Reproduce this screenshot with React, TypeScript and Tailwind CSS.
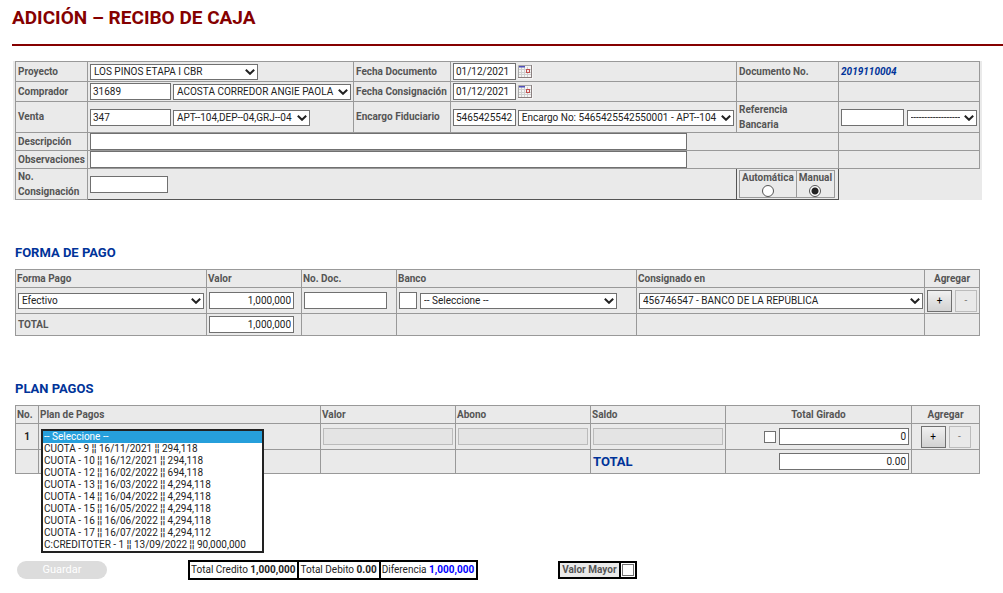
import { useState } from "react";
import type { InputHTMLAttributes, ReactNode, SelectHTMLAttributes } from "react";
import clsx from "clsx";

const CUOTAS = [
  "-- Seleccione --",
  "CUOTA - 9 ¦¦ 16/11/2021 ¦¦ 294,118",
  "CUOTA - 10 ¦¦ 16/12/2021 ¦¦ 294,118",
  "CUOTA - 12 ¦¦ 16/02/2022 ¦¦ 694,118",
  "CUOTA - 13 ¦¦ 16/03/2022 ¦¦ 4,294,118",
  "CUOTA - 14 ¦¦ 16/04/2022 ¦¦ 4,294,118",
  "CUOTA - 15 ¦¦ 16/05/2022 ¦¦ 4,294,118",
  "CUOTA - 16 ¦¦ 16/06/2022 ¦¦ 4,294,118",
  "CUOTA - 17 ¦¦ 16/07/2022 ¦¦ 4,294,112",
  "C:CREDITOTER - 1 ¦¦ 13/09/2022 ¦¦ 90,000,000",
];

const cell = "border border-[#999] p-0 px-[2px]";
const head = "border border-[#999] p-0 px-px font-bold";
const tableBase = "w-full table-fixed border-collapse bg-[#eaeaea]";

function TextBox({
  className,
  ...props
}: InputHTMLAttributes<HTMLInputElement>) {
  return (
    <input
      type="text"
      className={clsx(
        "h-[17px] min-w-0 border border-[#707070] bg-white px-[2px] text-[10px] leading-3 font-normal text-[#222] disabled:border-[#bbb] disabled:bg-[#e4e4e4]",
        className
      )}
      {...props}
    />
  );
}

interface SelectProps extends SelectHTMLAttributes<HTMLSelectElement> {
  options: string[];
}

function Select({ options, className, ...props }: SelectProps) {
  return (
    <span className={clsx("relative block h-4 min-w-0", className)}>
      <select
        className="block h-full w-full appearance-none border border-[#707070] bg-white pr-4 pl-[3px] text-[10px] leading-3 font-normal text-[#222]"
        {...props}
      >
        {options.map((option) => (
          <option key={option}>{option}</option>
        ))}
      </select>
      <svg
        viewBox="0 0 10 6"
        className="pointer-events-none absolute top-[5px] right-[3px] h-[6px] w-[10px]"
        fill="none"
        stroke="#222"
        strokeWidth="2"
      >
        <path d="M0.8 0.8 L5 4.8 L9.2 0.8" />
      </svg>
    </span>
  );
}

function CalendarButton({ label }: { label: string }) {
  return (
    <button type="button" aria-label={label} className="block">
      <svg viewBox="0 0 15 14" className="h-[14px] w-[15px]">
        <rect width="15" height="14" fill="#f5f5f5" />
        <path
          d="M3.5 2V12M6.5 2V12M9.5 2V12M0 4.5H13M0 7.5H13M0 9.5H13"
          stroke="#d0d0d0"
          strokeWidth="1"
        />
        <path d="M0.5 13V0.5H14" fill="none" stroke="#a8a8a8" />
        <path d="M13.5 0V13M0 12.5H14" stroke="#8a8080" strokeWidth="1" />
        <rect x="1" y="1" width="6" height="1.5" fill="#5050b8" />
        <rect x="8.5" y="4.5" width="3" height="3" fill="#f4eaea" stroke="#c25050" />
      </svg>
    </button>
  );
}

function RowButtons({ what }: { what: string }) {
  return (
    <div className="flex justify-center gap-[3px]">
      <button
        type="button"
        aria-label={`Agregar ${what}`}
        className="h-[22px] w-[25px] border border-[#707070] bg-linear-to-b from-[#f0f0f0] to-[#d2d2d2] text-[10px] leading-4 text-black"
      >
        +
      </button>
      <button
        type="button"
        disabled
        aria-label={`Quitar ${what}`}
        className="h-[22px] w-[22px] border border-[#bcbcbc] bg-[#e9e9e9] text-[10px] leading-4 text-[#777]"
      >
        -
      </button>
    </div>
  );
}

function SectionTitle({ children }: { children: ReactNode }) {
  return (
    <h2 className="ml-[2px] text-[13px] leading-4 font-bold text-[#003399]">
      {children}
    </h2>
  );
}

function DatosRecibo() {
  const [modo, setModo] = useState("manual");

  return (
    <div className="bg-[#eaeaea] px-[2px]">
      <table className={tableBase}>
        <colgroup>
          <col className="w-[72px]" />
          <col className="w-[266px]" />
          <col className="w-[97px]" />
          <col className="w-[286px]" />
          <col className="w-[102px]" />
          <col className="w-[141px]" />
        </colgroup>
        <tbody className="font-bold">
          <tr className="h-5">
            <td className={cell}>
              <label htmlFor="proyecto">Proyecto</label>
            </td>
            <td className={cell}>
              <Select id="proyecto" className="w-[168px]" options={["LOS PINOS ETAPA I CBR"]} />
            </td>
            <td className={cell}>
              <label htmlFor="fecha-doc">Fecha Documento</label>
            </td>
            <td className={cell}>
              <div className="flex items-center gap-[2px]">
                <TextBox id="fecha-doc" className="w-[63px]" defaultValue="01/12/2021" />
                <CalendarButton label="Elegir fecha documento" />
              </div>
            </td>
            <td className={cell}>Documento No.</td>
            <td className={clsx(cell, "text-[#003399] italic")}>2019110004</td>
          </tr>
          <tr className="h-5">
            <td className={cell}>
              <label htmlFor="comprador">Comprador</label>
            </td>
            <td className={cell}>
              <div className="flex items-end gap-[2px]">
                <TextBox id="comprador" className="w-[81px]" defaultValue="31689" />
                <Select
                  aria-label="Nombre del comprador"
                  className="w-[178px]"
                  options={["ACOSTA CORREDOR ANGIE PAOLA"]}
                />
              </div>
            </td>
            <td className={cell}>
              <label htmlFor="fecha-con" className="whitespace-nowrap">
                Fecha Consignación
              </label>
            </td>
            <td className={cell}>
              <div className="flex items-center gap-[2px]">
                <TextBox id="fecha-con" className="w-[63px]" defaultValue="01/12/2021" />
                <CalendarButton label="Elegir fecha consignación" />
              </div>
            </td>
            <td className={cell} />
            <td className={cell} />
          </tr>
          <tr className="h-[31px]">
            <td className={cell}>
              <label htmlFor="venta">Venta</label>
            </td>
            <td className={cell}>
              <div className="flex items-end gap-[2px]">
                <TextBox id="venta" className="w-[81px]" defaultValue="347" />
                <Select
                  aria-label="Unidades de la venta"
                  className="w-[137px]"
                  options={["APT--104,DEP--04,GRJ--04"]}
                />
              </div>
            </td>
            <td className={cell}>
              <label htmlFor="encargo" className="whitespace-nowrap">
                Encargo Fiduciario
              </label>
            </td>
            <td className={cell}>
              <div className="flex items-end gap-[2px]">
                <TextBox id="encargo" className="w-[63px]" defaultValue="5465425542550001" />
                <Select
                  aria-label="Encargo"
                  className="w-[217px]"
                  options={["Encargo No: 5465425542550001 - APT--104"]}
                />
              </div>
            </td>
            <td className={cell}>
              <label htmlFor="referencia" className="block w-16 leading-[15px]">
                Referencia Bancaria
              </label>
            </td>
            <td className={cell}>
              <div className="flex items-end gap-[3px]">
                <TextBox id="referencia" className="w-[63px]" />
                <Select
                  aria-label="Tipo de referencia"
                  className="w-[71px]"
                  options={["------------------"]}
                />
              </div>
            </td>
          </tr>
          <tr className="h-[18px]">
            <td className={cell}>
              <label htmlFor="descripcion">Descripción</label>
            </td>
            <td className={cell} colSpan={4}>
              <TextBox id="descripcion" className="block w-[597px]" />
            </td>
            <td className={cell} />
          </tr>
          <tr className="h-[18px]">
            <td className={cell}>
              <label htmlFor="observaciones">Observaciones</label>
            </td>
            <td className={cell} colSpan={4}>
              <TextBox id="observaciones" className="block w-[597px]" />
            </td>
            <td className={cell} />
          </tr>
          <tr className="h-[31px]">
            <td className={cell}>
              <label htmlFor="consignacion" className="block leading-[15px]">
                No. Consignación
              </label>
            </td>
            <td className={clsx(cell, "border-r-[#555] border-b-[#555]")} colSpan={3}>
              <TextBox id="consignacion" className="block w-[78px]" />
            </td>
            <td className="border border-t-[#999] border-r-[#555] border-b-[#555] border-l-[#555] p-0 px-[2px]">
              <div className="flex w-fit divide-x divide-[#999] border border-[#999]">
                <label className="flex flex-col items-center px-[2px]">
                  Automática
                  <input
                    type="radio"
                    name="modo"
                    className="size-3 appearance-none rounded-full border border-[#555] bg-white checked:bg-[radial-gradient(circle,#222_3px,#fff_4px)]"
                    checked={modo === "automatica"}
                    onChange={() => setModo("automatica")}
                  />
                </label>
                <label className="flex flex-col items-center px-[2px]">
                  Manual
                  <input
                    type="radio"
                    name="modo"
                    className="size-3 appearance-none rounded-full border border-[#555] bg-white checked:bg-[radial-gradient(circle,#222_3px,#fff_4px)]"
                    checked={modo === "manual"}
                    onChange={() => setModo("manual")}
                  />
                </label>
              </div>
            </td>
          </tr>
        </tbody>
      </table>
    </div>
  );
}

function FormaPago() {
  return (
    <div className="px-[2px]">
      <table className={tableBase}>
        <colgroup>
          <col className="w-[191px]" />
          <col className="w-[95px]" />
          <col className="w-[95px]" />
          <col className="w-[240px]" />
          <col className="w-[288px]" />
          <col className="w-[55px]" />
        </colgroup>
        <thead className="text-left">
          <tr className="h-[18px]">
            <th className={head}>Forma Pago</th>
            <th className={head}>Valor</th>
            <th className={head}>No. Doc.</th>
            <th className={head}>Banco</th>
            <th className={head}>Consignado en</th>
            <th className={clsx(head, "text-center")}>Agregar</th>
          </tr>
        </thead>
        <tbody>
          <tr className="h-[26px]">
            <td className={cell}>
              <Select aria-label="Forma Pago" options={["Efectivo"]} />
            </td>
            <td className={cell}>
              <TextBox
                aria-label="Valor"
                className="block w-[85px] text-right"
                defaultValue="1,000,000"
              />
            </td>
            <td className={cell}>
              <TextBox aria-label="No. Doc." className="block w-[83px]" />
            </td>
            <td className={cell}>
              <div className="flex items-end gap-[3px]">
                <TextBox aria-label="Código banco" className="w-[18px]" />
                <Select
                  aria-label="Banco"
                  className="w-[197px]"
                  options={["-- Seleccione --"]}
                />
              </div>
            </td>
            <td className={clsx(cell, "pr-px")}>
              <Select
                aria-label="Consignado en"
                options={["456746547 - BANCO DE LA REPÚBLICA"]}
              />
            </td>
            <td className={cell}>
              <RowButtons what="forma de pago" />
            </td>
          </tr>
          <tr className="h-[22px]">
            <td className={clsx(cell, "font-bold")}>
              <label htmlFor="total-forma">TOTAL</label>
            </td>
            <td className={cell}>
              <TextBox
                id="total-forma"
                readOnly
                className="block w-[85px] text-right"
                value="1,000,000"
              />
            </td>
            <td className={cell} />
            <td className={cell} />
            <td className={cell} />
            <td className={cell} />
          </tr>
        </tbody>
      </table>
    </div>
  );
}

function PlanPagos() {
  const [cuota, setCuota] = useState(CUOTAS[0]);

  return (
    <div className="px-[2px]">
      <table className={tableBase}>
        <colgroup>
          <col className="w-[23px]" />
          <col className="w-[282px]" />
          <col className="w-[135px]" />
          <col className="w-[135px]" />
          <col className="w-[135px]" />
          <col className="w-[186px]" />
          <col className="w-[68px]" />
        </colgroup>
        <thead className="text-left">
          <tr className="h-[18px]">
            <th className={head}>No.</th>
            <th className={head}>Plan de Pagos</th>
            <th className={head}>Valor</th>
            <th className={head}>Abono</th>
            <th className={head}>Saldo</th>
            <th className={clsx(head, "text-center")}>Total Girado</th>
            <th className={clsx(head, "text-center")}>Agregar</th>
          </tr>
        </thead>
        <tbody>
          <tr className="h-[26px]">
            <td className={clsx(cell, "text-center font-bold text-[#222]")}>1</td>
            <td className={cell}>
              <div className="relative h-4">
                {/* open list, drops over the rows below */}
                <select
                  size={10}
                  aria-label="Plan de Pagos"
                  value={cuota}
                  onChange={(e) => setCuota(e.target.value)}
                  className="absolute top-0 left-0 z-10 h-[124px] w-[223px] overflow-hidden border-2 border-[#222] bg-white text-[10px] leading-3 text-[#222]"
                >
                  {CUOTAS.map((item) => (
                    <option
                      key={item}
                      className="h-3 min-h-0 p-0 pl-px leading-3 checked:bg-linear-to-r checked:from-[#269fdb] checked:to-[#269fdb] checked:[-webkit-text-fill-color:white]"
                    >
                      {item}
                    </option>
                  ))}
                </select>
              </div>
            </td>
            <td className={cell}>
              <TextBox aria-label="Valor cuota" disabled className="block w-full" />
            </td>
            <td className={cell}>
              <TextBox aria-label="Abono" disabled className="block w-full" />
            </td>
            <td className={cell}>
              <TextBox aria-label="Saldo" disabled className="block w-full" />
            </td>
            <td className={cell}>
              <div className="flex items-center justify-end gap-[3px]">
                <input
                  type="checkbox"
                  aria-label="Girar total"
                  className="size-3 appearance-none border border-[#707070] bg-white checked:bg-[#707070]"
                />
                <TextBox
                  aria-label="Total Girado"
                  className="w-[130px] text-right"
                  defaultValue="0"
                />
              </div>
            </td>
            <td className={cell}>
              <RowButtons what="cuota" />
            </td>
          </tr>
          <tr className="h-6">
            <td className={cell} />
            <td className={cell} />
            <td className={cell} />
            <td className={cell} />
            <td className={clsx(cell, "text-[13px] font-bold text-[#003399]")}>
              <label htmlFor="total-plan">TOTAL</label>
            </td>
            <td className={cell}>
              <TextBox
                id="total-plan"
                readOnly
                className="ml-auto block w-[130px] text-right"
                value="0.00"
              />
            </td>
            <td className={cell} />
          </tr>
        </tbody>
      </table>
    </div>
  );
}

export default function App() {
  return (
    <form
      className="bg-white pb-3 font-[Roboto,sans-serif] text-[10px] leading-[14px] text-[#555]"
      onSubmit={(e) => e.preventDefault()}
    >
      <h1 className="ml-3 border-b-2 border-[#850000] pt-2 pb-4 text-[19px] leading-5 font-bold text-[#850000]">
        ADICIÓN – RECIBO DE CAJA
      </h1>

      <main className="mt-[15px] mr-[21px] ml-[13px]">
        <DatosRecibo />

        <section className="mt-[45px]">
          <SectionTitle>FORMA DE PAGO</SectionTitle>
          <div className="mt-2">
            <FormaPago />
          </div>
        </section>

        <section className="mt-[45px]">
          <SectionTitle>PLAN PAGOS</SectionTitle>
          <div className="mt-2">
            <PlanPagos />
          </div>
        </section>

        <footer className="mt-[86px] flex items-center pl-1">
          <button
            type="submit"
            disabled
            className="h-[18px] w-[90px] rounded-full bg-[#dcdcdc] text-[11px] leading-[14px] text-white"
          >
            Guardar
          </button>

          <div className="ml-[81px] flex divide-x-2 divide-black border-2 border-black bg-white leading-4 text-[#222]">
            <p className="pr-[2px] pl-px">
              Total Credito <b>1,000,000</b>
            </p>
            <p className="pr-[2px] pl-px">
              Total Debito <b>0.00</b>
            </p>
            <p className="pr-[2px] pl-px">
              Diferencia <b className="text-[#0000ff]">1,000,000</b>
            </p>
          </div>

          <div className="ml-20 flex divide-x-2 divide-black border-2 border-black bg-[#eaeaea]">
            <label htmlFor="valor-mayor" className="px-[2px] font-bold">
              Valor Mayor
            </label>
            <span className="bg-white p-px">
              <input
                id="valor-mayor"
                type="checkbox"
                className="block size-3 appearance-none border border-[#707070] bg-white checked:bg-[#707070]"
              />
            </span>
          </div>
        </footer>
      </main>
    </form>
  );
}
